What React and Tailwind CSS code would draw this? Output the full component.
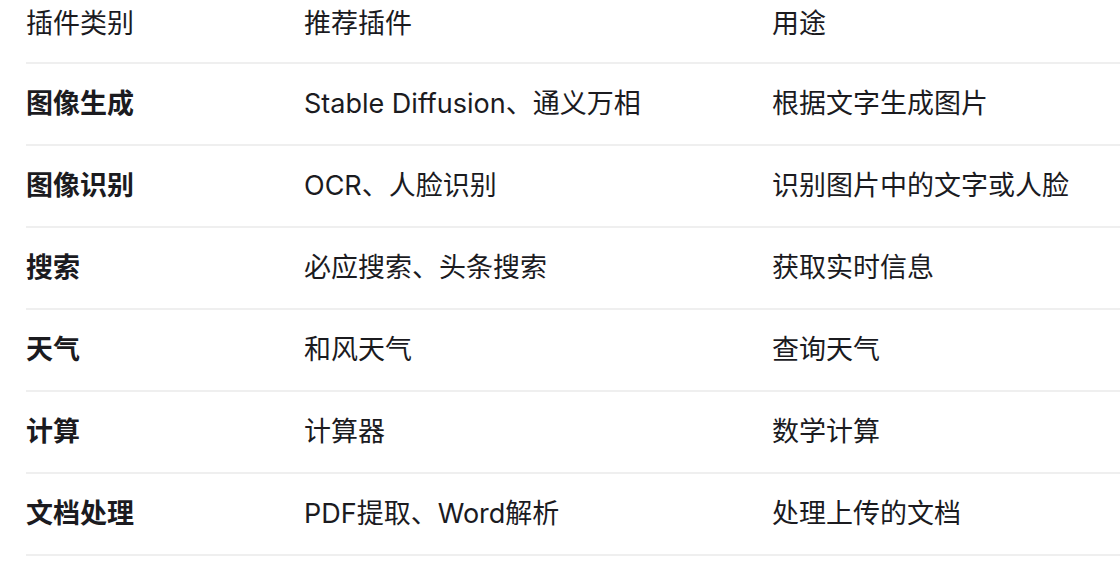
import React from "react";

const rows = [
  { cat: "图像生成", plugin: "Stable Diffusion、通义万相", use: "根据文字生成图片" },
  { cat: "图像识别", plugin: "OCR、人脸识别", use: "识别图片中的文字或人脸" },
  { cat: "搜索", plugin: "必应搜索、头条搜索", use: "获取实时信息" },
  { cat: "天气", plugin: "和风天气", use: "查询天气" },
  { cat: "计算", plugin: "计算器", use: "数学计算" },
  { cat: "文档处理", plugin: "PDF提取、Word解析", use: "处理上传的文档" },
];

export default function App() {
  return (
    <div
      className="w-[1120px] h-[581px] overflow-hidden bg-white pl-[26px] text-[27px] leading-[40px] text-[#1b1b1f]"
      style={{ fontFamily: '"Inter", "Noto Sans CJK SC", sans-serif' }}
    >
      <div className="grid grid-cols-[278px_468px_1fr] border-b-2 border-[#efefef] pt-[4px] pb-[18px]">
        <div>插件类别</div>
        <div>推荐插件</div>
        <div>用途</div>
      </div>
      {rows.map((r, i) => (
        <div
          key={i}
          className="grid grid-cols-[278px_468px_1fr] border-b-2 border-[#efefef] py-[20px]"
        >
          <div className="font-bold">{r.cat}</div>
          <div>{r.plugin}</div>
          <div>{r.use}</div>
        </div>
      ))}
    </div>
  );
}
